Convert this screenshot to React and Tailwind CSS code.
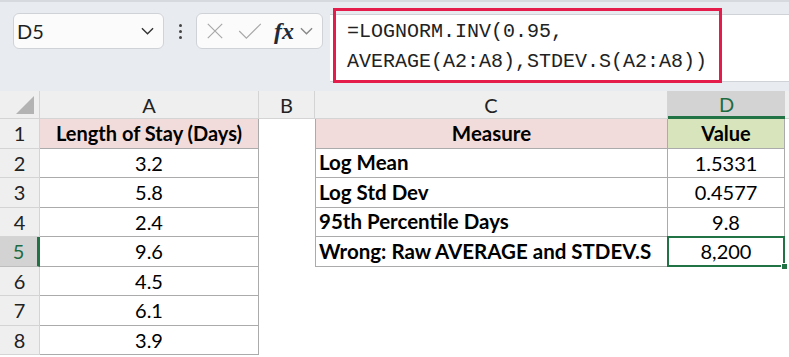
import React from "react";

const rowsA = ["Length of Stay (Days)", "3.2", "5.8", "2.4", "9.6", "4.5", "6.1", "3.9"];
const measures = [
  ["Measure", "Value"],
  ["Log Mean", "1.5331"],
  ["Log Std Dev", "0.4577"],
  ["95th Percentile Days", "9.8"],
  ["Wrong: Raw AVERAGE and STDEV.S", "8,200"],
];

function Chevron({ className }) {
  return (
    <svg viewBox="0 0 14 8" className={className} fill="none" stroke="currentColor" strokeWidth="1.5">
      <path d="M1 1l6 6 6-6" />
    </svg>
  );
}

function Toolbar() {
  return (
    <div className="h-[91px] bg-[#e8ebef] border-t-2 border-[#d6d9dd] flex items-start pl-[13px] pt-[11px]">
      {/* name box */}
      <div className="w-[151px] h-[36px] bg-[#fbfbfb] border border-[#cfd3d8] rounded-[6px] flex items-center justify-between pl-[3px] pr-[9px]">
        <span className="text-[20px] text-[#1f1f1f]">D5</span>
        <Chevron className="w-[13px] h-[8px] text-[#333]" />
      </div>
      {/* dots */}
      <div className="w-[32px] h-[36px] flex flex-col items-center justify-center gap-[3px]">
        <span className="w-[3px] h-[3px] bg-[#444] rounded-full" />
        <span className="w-[3px] h-[3px] bg-[#444] rounded-full" />
        <span className="w-[3px] h-[3px] bg-[#444] rounded-full" />
      </div>
      {/* formula buttons */}
      <div className="w-[127px] h-[36px] bg-[#fbfbfb] border border-[#cfd3d8] rounded-[6px] flex items-center pl-[9px]">
        <svg viewBox="0 0 20 20" className="w-[18px] h-[18px] text-[#a8a8a8]" fill="none" stroke="currentColor" strokeWidth="1.3">
          <path d="M2 2l16 16M18 2L2 18" />
        </svg>
        <svg viewBox="0 0 26 20" className="w-[24px] h-[18px] ml-[14px] text-[#a8a8a8]" fill="none" stroke="currentColor" strokeWidth="1.3">
          <path d="M1 10l8 8L25 2" />
        </svg>
        <span className="ml-[12px] italic font-bold text-[24px] leading-none text-[#1f2a3a] font-['Liberation_Serif',serif]">fx</span>
        <Chevron className="ml-[6px] w-[13px] h-[8px] text-[#888]" />
      </div>
      {/* formula bar */}
      <div className="relative ml-[7px] mt-[1px] flex-1 h-[68px] bg-white border-y border-[#cfd3d8]">
        <div className="absolute left-[3px] top-[-7px] w-[389px] h-[75px] border-[3px] border-[#e31c4b] pl-[11px] pt-[6px] font-['Liberation_Mono',monospace] text-[20px] leading-[30px] text-[#222]">
          <div>=LOGNORM.INV(0.95,</div>
          <div>AVERAGE(A2:A8),STDEV.S(A2:A8))</div>
        </div>
      </div>
    </div>
  );
}

function App() {
  const hdr = "bg-[#efefef] border-r border-b border-[#d4d4d4] flex items-center justify-center text-[20px] text-[#222]";
  const dataBorder = "border-[#ababab]";
  return (
    <div className="w-[789px] h-[357px] overflow-hidden bg-white font-['Lato',sans-serif]">
      <Toolbar />
      <div className="grid grid-cols-[40px_219px_56px_353px_117px_1fr] grid-rows-[28px_repeat(8,29.5px)]">
        {/* header row */}
        <div className={`${hdr} items-end justify-end pr-[5px] pb-[4px]`}>
          <svg viewBox="0 0 18 18" className="w-[18px] h-[18px]">
            <path d="M18 0V18H0Z" fill="#b3b3b3" />
          </svg>
        </div>
        <div className={hdr}>A</div>
        <div className={hdr}>B</div>
        <div className={hdr}>C</div>
        <div className="bg-[#d3d3d3] border-b-[3px] border-[#217346] flex items-center justify-center text-[20px] text-[#1e6b41]">D</div>
        <div className="bg-[#efefef] border-b border-[#d4d4d4]" />

        {rowsA.map((a, i) => {
          const m = measures[i];
          const sel = i === 4;
          return (
            <React.Fragment key={i}>
              <div
                className={
                  sel
                    ? "bg-[#d3d3d3] border-r-[3px] border-b border-r-[#217346] border-b-[#bdbdbd] flex items-center justify-center text-[20px] text-[#1e6b41]"
                    : "bg-[#efefef] border-r border-b border-[#d4d4d4] flex items-center justify-center text-[20px] text-[#222]"
                }
              >
                {i + 1}
              </div>
              <div
                className={`border-r border-b ${dataBorder} flex items-center justify-center text-[20px] text-black ${
                  i === 0 ? "bg-[#f2dcdb] font-bold text-[20.5px]" : "bg-white"
                }`}
              >
                {a}
              </div>
              <div className="bg-white" />
              {m ? (
                <>
                  <div
                    className={`border-l border-r border-b ${dataBorder} flex items-center text-[20.5px] font-bold text-black ${
                      i === 0 ? "bg-[#f2dcdb] justify-center" : "bg-white pl-[3px]"
                    }`}
                  >
                    {m[0]}
                  </div>
                  <div
                    className={`relative flex items-center justify-center text-[20px] text-black ${
                      i === 0 ? "bg-[#d8e4bc] font-bold border-r border-b border-[#ababab]" : "bg-white"
                    } ${sel ? "border-[2px] border-[#217346] -ml-[1px] -mt-[1px]" : i > 0 ? "border-r border-b border-[#ababab]" : ""}`}
                  >
                    {m[1]}
                    {sel && (
                      <span className="absolute right-[-5px] bottom-[-5px] w-[7px] h-[7px] bg-[#217346] border border-white" />
                    )}
                  </div>
                </>
              ) : (
                <>
                  <div className="bg-white" />
                  <div className="bg-white" />
                </>
              )}
              <div className="bg-white" />
            </React.Fragment>
          );
        })}
      </div>
    </div>
  );
}

export default App;
